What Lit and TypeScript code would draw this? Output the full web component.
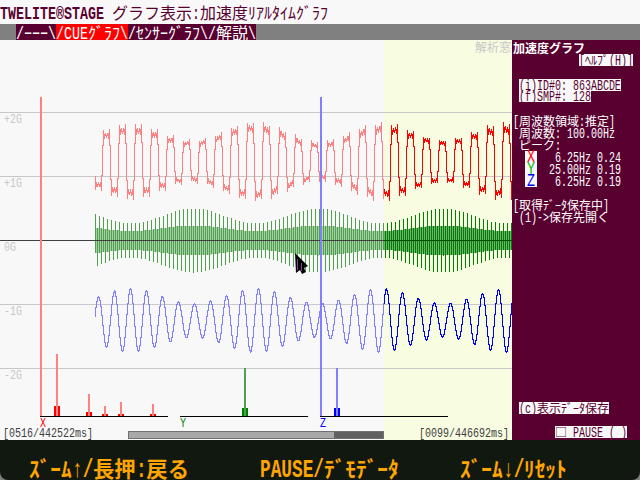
import { LitElement, html, css, svg } from "lit";
import { customElement } from "lit/decorators.js";

const isCjk = (c: string) => c.charCodeAt(0) >= 0x3000 || c === "□";

function t(text: string) {
  const runs: { cjk: boolean; s: string }[] = [];
  for (const c of text) {
    const k = isCjk(c);
    const last = runs[runs.length - 1];
    if (last && last.cjk === k) last.s += c;
    else runs.push({ cjk: k, s: c });
  }
  return runs.map((r) =>
    r.cjk
      ? html`<span class="cjk">${r.s}</span>`
      : html`<span class="lat" style="--n:${[...r.s].length}">${r.s}</span>`
  );
}

const W = 2 * Math.PI;
const mod = (x: number) => 7.5 * Math.cos((W * (x - 193)) / 125);
const blueAmp = (x: number) => 24.5 - mod(x);
const greenAmp = (x: number) => 24.5 + mod(x);
const innerAmp = (x: number) => 9.5 + ((greenAmp(x) - 17) / 15) * 5.5;

const blueY = (x: number) => 320 - blueAmp(x) * Math.sin((W * (x - 94)) / 16);
const redY = (x: number) => {
  const a = (W * (x - 102)) / 16;
  const s = Math.sin(a) + Math.sin(3 * a) / 3 + Math.sin(5 * a) / 5 + Math.sin(7 * a) / 7;
  const jitter = Math.sin(x * 12.9898) * 1.5;
  return 161 - 1.28 * blueAmp(x) * s + jitter;
};

function trace(f: (x: number) => number, from: number, to: number) {
  let d = "";
  for (let x = from; x < to; x++) {
    const a = f(x);
    const p = f(x - 1);
    const n = f(x + 1);
    const lo = Math.round(Math.min(a, (a + p) / 2, (a + n) / 2));
    const hi = Math.round(Math.max(a, (a + p) / 2, (a + n) / 2));
    d += `M${x + 0.5} ${lo}V${hi + 1}`;
  }
  return d;
}

function greenBars(from: number, to: number) {
  let d = "";
  for (let x = 95; x < 512; x += 2) {
    if (x < from || x >= to) continue;
    const o = greenAmp(x);
    const i = innerAmp(x);
    const phase = (x - 95) % 4 === 0;
    const top = phase ? 240.5 - o : 240.5 - i;
    const bot = phase ? 240.5 + i : 240.5 + o;
    d += `M${x + 0.5} ${Math.round(top)}V${Math.round(bot)}`;
  }
  return d;
}

function greenFill(from: number, to: number) {
  let d = "";
  for (let x = 96; x < 512; x += 2) {
    if (x < from || x >= to) continue;
    const i = innerAmp(x);
    d += `M${x + 0.5} ${Math.round(240.5 - i)}V${Math.round(240.5 + i)}`;
  }
  return d;
}

const spikes = [
  { pale: "#ff8080", dark: "#ff0000", x: 54, top: 354, base: 406 },
  { pale: "#ff8080", dark: "#ff0000", x: 86, top: 394, base: 412 },
  { pale: "#ff8080", dark: "#ff0000", x: 102, top: 406, base: 414 },
  { pale: "#ff8080", dark: "#ff0000", x: 118, top: 402, base: 414 },
  { pale: "#ff8080", dark: "#ff0000", x: 150, top: 404, base: 414 },
  { pale: "#50a050", dark: "#008000", x: 242, top: 368, base: 408 },
  { pale: "#8080ff", dark: "#0000ff", x: 334, top: 368, base: 408 },
];

const mono = (x: number, y: number, s: string, fill: string) =>
  svg`<text class="mono" x=${x} y=${y} fill=${fill} textLength=${s.length * 6} lengthAdjust="spacingAndGlyphs">${s}</text>`;

@customElement("app-root")
export class AppRoot extends LitElement {
  static styles = css`
    :host {
      display: grid;
      grid-template-rows: 24px 16px 400px 40px;
      width: 640px;
      height: 480px;
      background: #808080;
      overflow: hidden;
    }
    .cjk {
      font-family: "Noto Sans CJK JP", sans-serif;
      font-size: calc(var(--u) * 2);
      white-space: pre;
    }
    .lat {
      display: inline-block;
      width: calc(var(--u) * var(--n));
      font-family: "Liberation Mono", monospace;
      font-size: calc(var(--u) * 2.333);
      transform: scaleX(0.714);
      transform-origin: 0 50%;
      white-space: pre;
    }
    .title {
      --u: 8px;
      background: #f8f8f8;
      color: #580030;
      line-height: 24px;
      white-space: nowrap;
    }
    .brand .lat {
      font-weight: 700;
    }
    .tabs {
      --u: 8px;
      display: flex;
      padding-left: 16px;
      line-height: 16px;
      background: #808080;
      color: #fff;
    }
    .tab {
      background: #580030;
      height: 16px;
    }
    .tab.on {
      background: #ff0000;
    }
    .main {
      display: flex;
    }
    .chart {
      width: 512px;
      height: 400px;
      display: block;
    }
    .mono {
      font-family: "Liberation Mono", monospace;
      font-size: 13px;
    }
    .jp {
      font-family: "Noto Sans CJK JP", sans-serif;
      font-size: 12px;
    }
    .side {
      --u: 6px;
      width: 128px;
      background: #580030;
      color: #fff;
      display: flex;
      flex-direction: column;
      align-items: flex-start;
      padding: 2px 0 0 1px;
      box-sizing: border-box;
    }
    .row {
      height: 12px;
      line-height: 12px;
      white-space: pre;
    }
    .inv {
      background: #f8f8f8;
      color: #580030;
    }
    .heading {
      font-weight: 700;
    }
    .help {
      align-self: flex-end;
      margin-right: 7px;
    }
    .in {
      margin-left: 6px;
    }
    .id {
      margin-top: 13px;
    }
    .id2 {
      margin-top: -1px;
    }
    .freq {
      margin-top: 13px;
    }
    .peaks {
      display: flex;
      margin-left: 12px;
    }
    .box {
      --u: 8px;
      width: 12px;
      background: #f8f8f8;
      text-align: center;
    }
    .x { color: #ff0000; }
    .y { color: #00c000; }
    .z { color: #0000ff; }
    .save {
      margin-top: 12px;
    }
    .export {
      margin-top: 179px;
      margin-left: 6px;
    }
    .pause {
      margin-top: 12px;
      margin-left: 42px;
    }
    .foot {
      --u: 10.667px;
      display: grid;
      grid-template-columns: 231px 200px auto;
      align-items: end;
      padding: 0 0 0 29px;
      background: #101810;
      border-radius: 0 0 8px 8px;
      color: #ffa500;
      font-weight: 700;
      line-height: 16px;
      white-space: nowrap;
    }
  `;

  private chart() {
    return svg`<svg class="chart" viewBox="0 40 512 400" shape-rendering="crispEdges">
      <rect x="0" y="40" width="384" height="400" fill="#f8f8f8"></rect>
      <rect x="384" y="40" width="128" height="400" fill="#f8fce0"></rect>
      ${[112, 176, 304, 368].map(
        (y) => svg`<rect x="0" y=${y} width="512" height="1" fill="#c8c8c8"></rect>`
      )}
      ${mono(4, 123, "+2G", "#c8c8c8")}
      ${mono(4, 187, "+1G", "#c8c8c8")}
      ${mono(4, 251, "0G", "#c8c8c8")}
      ${mono(4, 315, "-1G", "#c8c8c8")}
      ${mono(4, 379, "-2G", "#c8c8c8")}
      <text class="jp" x="475" y="52" fill="#c8c8c8">解析窓</text>

      <path d=${trace(redY, 95, 384)} stroke="#ff8080" fill="none"></path>
      <path d=${trace(redY, 384, 512)} stroke="#ff0000" fill="none"></path>
      <path d=${greenFill(95, 384)} stroke="#a8d0a8" fill="none"></path>
      <path d=${greenFill(384, 512)} stroke="#70b070" fill="none"></path>
      <path d=${greenBars(95, 384)} stroke="#50a050" fill="none"></path>
      <path d=${greenBars(384, 512)} stroke="#008000" fill="none"></path>
      <rect x="0" y="240" width="384" height="1" fill="#404040"></rect>
      <rect x="384" y="240" width="128" height="1" fill="#005000"></rect>
      <path d=${trace(blueY, 95, 384)} stroke="#8080ff" fill="none"></path>
      <path d=${trace(blueY, 384, 512)} stroke="#0000ff" fill="none"></path>

      <rect x="40" y="97" width="2" height="319" fill="#ff8080"></rect>
      <rect x="320" y="97" width="2" height="319" fill="#8080ff"></rect>

      ${spikes.map(
        (s) => svg`
          <rect x=${s.x} y=${s.base} width="6" height=${416 - s.base} fill=${s.dark}></rect>
          <rect x=${s.x + 2} y=${s.top} width="2" height=${416 - s.top} fill=${s.pale}></rect>`
      )}
      <rect x="40" y="416" width="128" height="1" fill="#000"></rect>
      <rect x="180" y="416" width="128" height="1" fill="#000"></rect>
      <rect x="320" y="416" width="128" height="1" fill="#000"></rect>
      ${mono(40, 427, "X", "#ff0000")}
      ${mono(180, 427, "Y", "#008000")}
      ${mono(320, 427, "Z", "#0000ff")}

      ${mono(3, 437, "[0516/442522ms]", "#404040")}
      ${mono(419, 437, "[0099/446692ms]", "#404040")}
      <rect x="128.5" y="431.5" width="255" height="7" fill="#a8a8a8" stroke="#707070"></rect>
      <rect x="334" y="432" width="49" height="6" fill="#606060"></rect>

      <path d="M295 253L308 266L304 268L306 272L302 274L300 270L296 273Z" fill="#000" shape-rendering="auto"></path>
      <rect x="297" y="259" width="1" height="11" fill="#8040a0"></rect>
      <rect x="301" y="263" width="1" height="8" fill="#8040a0"></rect>
    </svg>`;
  }

  render() {
    return html`
      <div class="title">
        <span class="brand">${t("TWELITE®STAGE")}</span>${t(" グラフ表示:加速度ﾘｱﾙﾀｲﾑｸﾞﾗﾌ")}
      </div>
      <div class="tabs">
        <div class="tab">${t("/ｰｰｰ\\")}</div>
        <div class="tab on">${t("/CUEｸﾞﾗﾌ\\")}</div>
        <div class="tab">${t("/ｾﾝｻｰｸﾞﾗﾌ\\")}</div>
        <div class="tab">${t("/解説\\")}</div>
      </div>
      <div class="main">
        ${this.chart()}
        <div class="side">
          <div class="row heading">${t("加速度グラフ")}</div>
          <div class="row inv help">${t("[ﾍﾙﾌﾟ(H)]")}</div>
          <div class="row inv in id">${t("(i)ID#0: 863ABCDE")}</div>
          <div class="row inv in id2">${t("(f)SMP#: 128")}</div>
          <div class="row freq">${t("[周波数領域:推定]")}</div>
          <div class="row in">${t("周波数: 100.00Hz")}</div>
          <div class="row in">${t("ピーク:")}</div>
          <div class="peaks">
            <div class="box">
              <div class="row x">${t("X")}</div>
              <div class="row y">${t("Y")}</div>
              <div class="row z">${t("Z")}</div>
            </div>
            <div>
              <div class="row">${t("   6.25Hz 0.24")}</div>
              <div class="row">${t("  25.00Hz 0.19")}</div>
              <div class="row">${t("   6.25Hz 0.19")}</div>
            </div>
          </div>
          <div class="row save">${t("[取得ﾃﾞｰﾀ保存中]")}</div>
          <div class="row in">${t("(1)->保存先開く")}</div>
          <div class="row inv export">${t("(c)表示ﾃﾞｰﾀ保存")}</div>
          <div class="row inv pause">${t("□ PAUSE (_)")}</div>
        </div>
      </div>
      <div class="foot">
        <div>${t("ｽﾞｰﾑ↑/長押:戻る")}</div>
        <div>${t("PAUSE/ﾃﾞﾓﾃﾞｰﾀ")}</div>
        <div>${t("ｽﾞｰﾑ↓/ﾘｾｯﾄ")}</div>
      </div>
    `;
  }
}
